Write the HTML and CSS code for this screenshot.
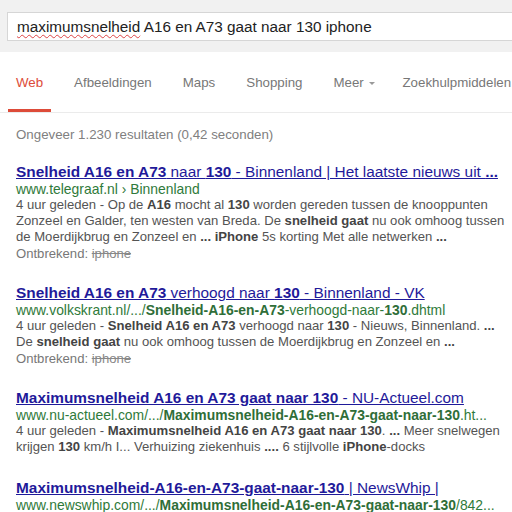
FILE: index.html
```html
<!DOCTYPE html>
<html>
<head>
<meta charset="utf-8">
<link rel="stylesheet" href="styles.css">
</head>
<body>
<div class="top">
  <div class="searchbox"><span class="sp">maximumsnelheid</span> A16 en A73 gaat naar 130 iphone</div>
</div>
<div class="tabs">
  <div class="tab active">Web</div>
  <div class="tab">Afbeeldingen</div>
  <div class="tab">Maps</div>
  <div class="tab">Shopping</div>
  <div class="tab meer">Meer <span class="caret"></span></div>
  <div class="tab">Zoekhulpmiddelen</div>
</div>
<div class="stats">Ongeveer 1.230 resultaten (0,42 seconden)</div>
<div class="results">
  <div class="res">
    <div class="title"><b>Snelheid A16 en A73</b> naar <b>130</b> - Binnenland | Het laatste nieuws uit <b>...</b></div>
    <div class="url">www.telegraaf.nl › Binnenland</div>
    <div class="snip">4 uur geleden - Op de <b>A16</b> mocht al <b>130</b> worden gereden tussen de knooppunten<br>Zonzeel en Galder, ten westen van Breda. De <b>snelheid gaat</b> nu ook omhoog tussen<br>de Moerdijkbrug en Zonzeel en <b>...</b> <b>iPhone</b> 5s korting Met alle netwerken <b>...</b></div>
    <div class="miss">Ontbrekend: <s>iphone</s></div>
  </div>
  <div class="res">
    <div class="title"><b>Snelheid A16 en A73</b> verhoogd naar <b>130</b> - Binnenland - VK</div>
    <div class="url">www.volkskrant.nl/.../<b>Snelheid-A16-en-A73</b>-verhoogd-naar-<b>130</b>.dhtml</div>
    <div class="snip">4 uur geleden - <b>Snelheid A16 en A73</b> verhoogd naar <b>130</b> - Nieuws, Binnenland. <b>...</b><br>De <b>snelheid gaat</b> nu ook omhoog tussen de Moerdijkbrug en Zonzeel en <b>...</b></div>
    <div class="miss">Ontbrekend: <s>iphone</s></div>
  </div>
  <div class="res res3">
    <div class="title"><b>Maximumsnelheid A16 en A73 gaat naar 130</b> - NU-Actueel.com</div>
    <div class="url">www.nu-actueel.com/.../<b>Maximumsnelheid-A16-en-A73-gaat-naar-130</b>.ht...</div>
    <div class="snip">4 uur geleden - <b>Maximumsnelheid A16 en A73 gaat naar 130</b>. <b>...</b> Meer snelwegen<br>krijgen <b>130</b> km/h I... Verhuizing ziekenhuis <b>....</b> 6 stijlvolle <b>iPhone</b>-docks</div>
  </div>
  <div class="res">
    <div class="title"><b>Maximumsnelheid-A16-en-A73-gaat-naar-130</b> | NewsWhip |</div>
    <div class="url">www.newswhip.com/.../<b>Maximumsnelheid-A16-en-A73-gaat-naar-130</b>/842...</div>
  </div>
</div>
</body>
</html>
```
FILE: styles.css
```css
html, body {
  margin: 0;
  padding: 0;
  background: #fff;
  font-family: "Liberation Sans", Arial, sans-serif;
  overflow: hidden;
}
body {
  width: 512px;
  height: 512px;
}
.top {
  background: #f1f1f1;
  height: 52px;
  padding: 12px 0 0 7px;
  box-sizing: border-box;
}
.searchbox {
  background: #fff;
  border: 1px solid #d6d6d6;
  border-right: none;
  height: 29px;
  box-sizing: border-box;
  padding-left: 9px;
  font-size: 15.3px;
  line-height: 27px;
  color: #222;
  white-space: nowrap;
}
.sp {
  text-decoration: underline wavy #d44;
  text-decoration-thickness: 1px;
  text-underline-offset: 2px;
}
.tabs {
  display: flex;
  height: 60px;
  border-bottom: 1px solid #ebebeb;
  padding-left: 8px;
  white-space: nowrap;
}
.tab {
  font-size: 13.3px;
  color: #777;
  padding: 23px 8px 0 8px;
  margin-right: 15px;
  box-sizing: border-box;
  height: 60px;
  border-bottom: 3px solid transparent;
}
.tab.meer {
  margin-right: 11px;
}
.tab.active {
  color: #dd4b39;
  border-bottom-color: #dd4b39;
}
.caret {
  display: inline-block;
  width: 0;
  height: 0;
  border-left: 3px solid transparent;
  border-right: 3px solid transparent;
  border-top: 3px solid #999;
  vertical-align: middle;
  margin-left: 2px;
}
.stats {
  font-size: 13.3px;
  color: #808080;
  padding: 14px 0 0 16px;
  height: 50px;
  box-sizing: border-box;
}
.results {
  padding-left: 16px;
}
.res {
  margin-bottom: 22px;
}
.res3 {
  margin-bottom: 24px;
}
.title {
  font-size: 15.4px;
  line-height: 18px;
  color: #1f1a9a;
  text-decoration: underline;
  white-space: nowrap;
}
.url {
  font-size: 13.9px;
  line-height: 16px;
  color: #2f7a3a;
  white-space: nowrap;
}
.url b { color: #2f6e38; }
.snip, .miss {
  font-size: 13.1px;
  line-height: 16px;
  color: #545454;
  white-space: nowrap;
}
.snip b { color: #444; }
.miss { color: #777; margin-top: 1px; }
.miss s { color: #888; }
```
